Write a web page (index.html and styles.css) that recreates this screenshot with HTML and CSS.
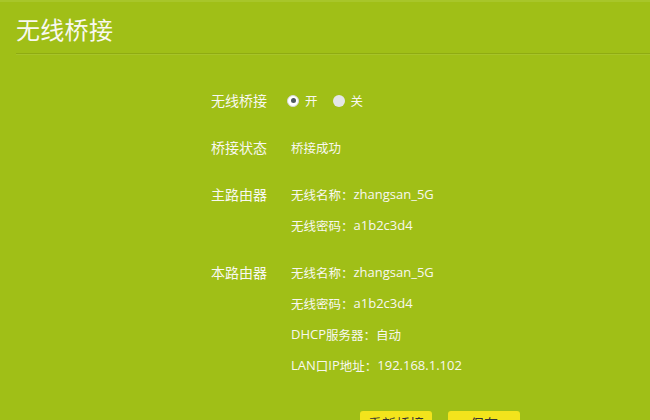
FILE: index.html
```html
<!DOCTYPE html>
<html lang="zh-CN">
<head>
<meta charset="utf-8">
<title>无线桥接</title>
<link rel="stylesheet" href="styles.css">
</head>
<body>
<div class="page">
  <div class="header"><h1 class="title">无线桥接</h1></div>
  <div class="form">
    <div class="group">
      <div class="label">无线桥接</div>
      <div class="values">
        <div class="value radios">
          <span class="radio checked"></span><span class="radio-text">开</span>
          <span class="radio"></span><span class="radio-text">关</span>
        </div>
      </div>
    </div>
    <div class="group">
      <div class="label">桥接状态</div>
      <div class="values"><div class="value">桥接成功</div></div>
    </div>
    <div class="group">
      <div class="label">主路由器</div>
      <div class="values">
        <div class="value">无线名称：<span class="latin">zhangsan_5G</span></div>
        <div class="value">无线密码：<span class="latin">a1b2c3d4</span></div>
      </div>
    </div>
    <div class="group">
      <div class="label">本路由器</div>
      <div class="values">
        <div class="value">无线名称：<span class="latin">zhangsan_5G</span></div>
        <div class="value">无线密码：<span class="latin">a1b2c3d4</span></div>
        <div class="value"><span class="latin">DHCP</span>服务器：自动</div>
        <div class="value"><span class="latin">LAN</span>口<span class="latin">IP</span>地址：<span class="latin">192.168.1.102</span></div>
      </div>
    </div>
    <div class="buttons">
      <button class="btn">重新桥接</button>
      <button class="btn">保存</button>
    </div>
  </div>
</div>
</body>
</html>
```
FILE: styles.css
```css
html, body {
  margin: 0;
  padding: 0;
}
body {
  background: #a0bf17;
  color: #f8f8f0;
  font-family: "Noto Sans CJK SC", "Noto Sans", sans-serif;
  width: 650px;
  height: 420px;
  overflow: hidden;
}
.page {
  border-top: 2px solid #a8c62a;
}
.header {
  margin-left: 16px;
  height: 51px;
  border-bottom: 1px solid #8fab12;
  box-shadow: 0 1px 0 rgba(255, 255, 255, 0.08);
  display: flex;
  align-items: center;
}
.title {
  margin: 0;
  font-size: 24px;
  font-weight: normal;
  line-height: 1;
  letter-spacing: 0.3px;
  padding-top: 3px;
}
.form {
  margin-left: 211px;
  padding-top: 31px;
}
.group {
  display: flex;
  margin-bottom: 16px;
}
.label {
  width: 80px;
  font-size: 14px;
  line-height: 31px;
}
.values {
  display: flex;
  flex-direction: column;
}
.value {
  font-size: 12.5px;
  line-height: 31px;
  display: flex;
  align-items: center;
}
.latin {
  font-family: "Open Sans", "Noto Sans", sans-serif;
  font-size: 13px;
}
.radio {
  width: 12px;
  height: 12px;
  border-radius: 50%;
  background: #e4e6e8;
  box-sizing: border-box;
  display: inline-flex;
  align-items: center;
  justify-content: center;
  margin-left: -4px;
}
.radio.checked {
  background: #ffffff;
  border: 1px solid #d6d8d8;
}
.radio.checked::after {
  content: "";
  width: 5px;
  height: 5px;
  border-radius: 50%;
  background: #4f5a5f;
}
.radio-text {
  margin-left: 6px;
  margin-right: 19px;
}
.buttons {
  display: flex;
  gap: 16px;
  margin-left: 149px;
  padding-top: 14px;
}
.btn {
  width: 72px;
  height: 30px;
  border: none;
  border-radius: 3px;
  background: #f3e41c;
  color: #333333;
  font-family: "Noto Sans CJK SC", sans-serif;
  font-size: 14px;
  line-height: 18px;
  padding: 3px 0 9px;
}
```
